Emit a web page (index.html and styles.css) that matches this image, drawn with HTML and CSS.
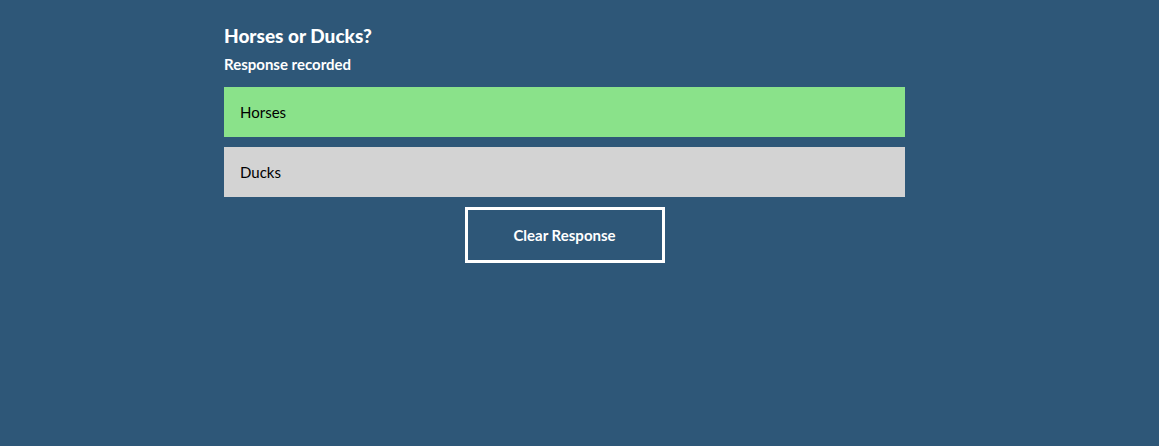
FILE: index.html
```html
<!DOCTYPE html>
<html>
<head>
<meta charset="utf-8">
<link rel="stylesheet" href="styles.css">
</head>
<body>
<div class="poll">
  <h1 class="title">Horses or Ducks?</h1>
  <p class="status">Response recorded</p>
  <div class="options">
    <div class="option selected">Horses</div>
    <div class="option">Ducks</div>
  </div>
  <div class="actions">
    <button class="clear">Clear Response</button>
  </div>
</div>
</body>
</html>
```
FILE: styles.css
```css
html, body {
  margin: 0;
  padding: 0;
  background: #2e5778;
  height: 100%;
}
body {
  font-family: Lato, "Open Sans", "Liberation Sans", sans-serif;
  color: #fff;
}
.poll {
  width: 681px;
  margin-left: 224px;
  padding-top: 25px;
}
.title {
  margin: 0;
  font-size: 19px;
  font-weight: 900;
  line-height: 22px;
}
.status {
  margin: 7px 0 0 0;
  font-size: 15px;
  font-weight: 700;
  line-height: 20px;
}
.options {
  margin-top: 13px;
  display: flex;
  flex-direction: column;
  gap: 10px;
}
.option {
  height: 50px;
  display: flex;
  align-items: center;
  padding-left: 16px;
  background: #d3d3d3;
  color: #000;
  font-size: 15px;
}
.option.selected {
  background: #8ae28a;
}
.actions {
  display: flex;
  justify-content: center;
  margin-top: 10px;
}
.clear {
  width: 200px;
  height: 56px;
  background: transparent;
  border: 3px solid #fff;
  color: #fff;
  font-family: inherit;
  font-size: 15px;
  font-weight: 700;
  cursor: pointer;
}
```
